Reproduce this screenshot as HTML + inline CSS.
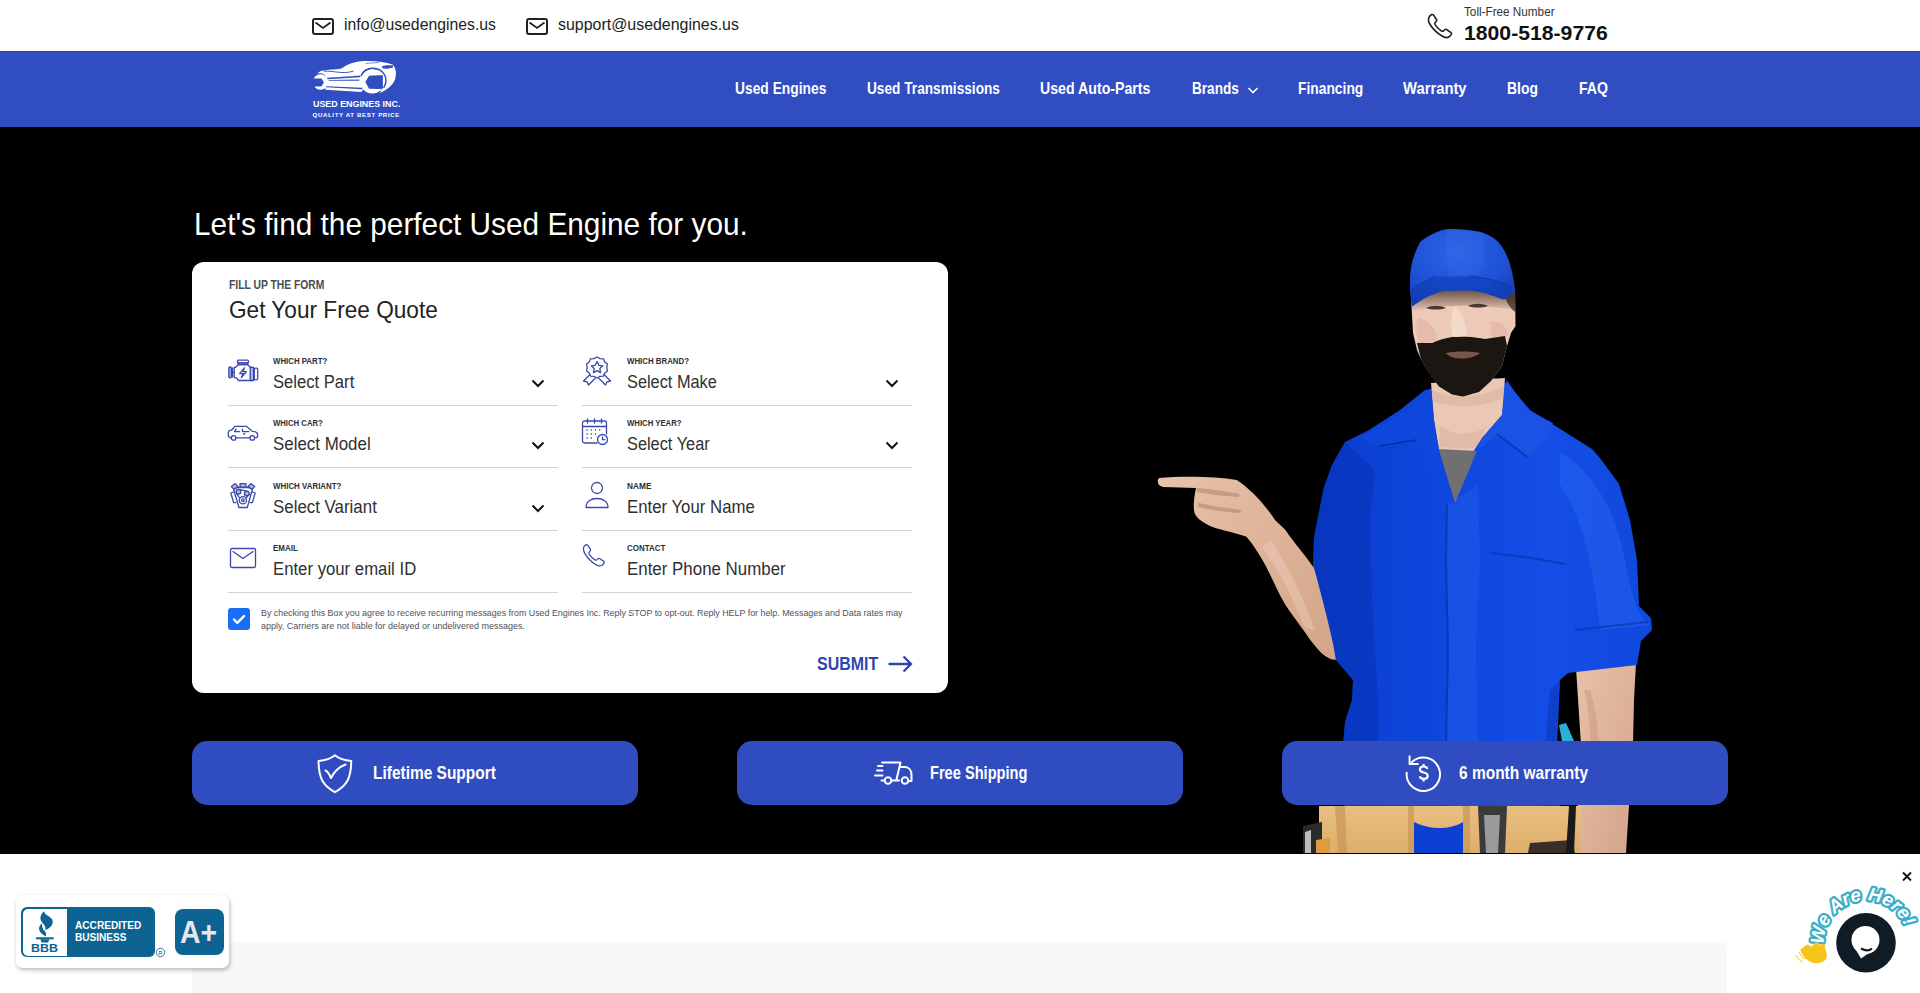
<!DOCTYPE html><html><head><meta charset="utf-8"><style>
*{margin:0;padding:0;box-sizing:border-box}
html,body{width:1920px;height:993px;overflow:hidden;background:#fff;font-family:"Liberation Sans",sans-serif}
.a{position:absolute;white-space:nowrap;line-height:1;transform-origin:0 0}
.r{position:absolute}
.ln{position:absolute;height:1px;background:#d4d4d8}
.bar{position:absolute;top:741px;width:446px;height:64px;background:#304cc1;border-radius:15px}
</style></head><body>
<div class="r" style="left:0;top:0;width:1920px;height:51px;background:#fff"></div>
<div class="r" style="left:0;top:51px;width:1920px;height:76px;background:#304dc1"></div>
<div class="r" style="left:0;top:127px;width:1920px;height:727px;background:#000"></div>
<div class="r" style="left:0;top:51px;width:1920px;height:1px;background:#2f479f"></div>
<svg class="r" style="left:312px;top:18px" width="22" height="17" viewBox="0 0 22 17"><rect x="1" y="1" width="20" height="15" rx="2" fill="none" stroke="#222" stroke-width="2"/><path d="M3.5 4.5l7.5 5.5 7.5-5.5" fill="none" stroke="#222" stroke-width="1.8"/></svg>
<svg class="r" style="left:526px;top:18px" width="22" height="17" viewBox="0 0 22 17"><rect x="1" y="1" width="20" height="15" rx="2" fill="none" stroke="#222" stroke-width="2"/><path d="M3.5 4.5l7.5 5.5 7.5-5.5" fill="none" stroke="#222" stroke-width="1.8"/></svg>
<div class="a" style="left:344.00px;top:16.60px;font-size:16.77px;color:#222;transform:scaleX(0.9408);">info@usedengines.us</div>
<div class="a" style="left:558.00px;top:16.60px;font-size:16.77px;color:#222;transform:scaleX(0.9502);">support@usedengines.us</div>
<svg class="r" style="left:1426px;top:12px" width="27" height="27" viewBox="0 0 27 27"><path d="M3.5 4.5c1.5-2 3-2.5 4-1.5l3 4.5c.6 1-.2 2-1.2 2.8-.8.6-.6 1.6 0 2.6 1.5 2.3 3.5 4.3 5.8 5.8 1 .6 2 .8 2.6 0 .8-1 1.8-1.8 2.8-1.2l4.5 3c1 1 .5 2.5-1.5 4-2 1.5-4.5 1.5-7.5-.5C11 21 6 16 3.5 11.5c-1.6-3-1.5-5 0-7z" fill="none" stroke="#222" stroke-width="1.6"/></svg>
<div class="a" style="left:1463.80px;top:4.72px;font-size:13.08px;color:#333;transform:scaleX(0.8965);">Toll-Free Number</div>
<div class="a" style="left:1463.80px;top:23.16px;font-size:20.60px;font-weight:bold;color:#111;transform:scaleX(1.0288);">1800-518-9776</div>
<div class="a" style="left:735.10px;top:80.96px;font-size:15.99px;font-weight:bold;color:#fff;transform:scaleX(0.8645);">Used Engines</div>
<div class="a" style="left:866.50px;top:80.96px;font-size:15.99px;font-weight:bold;color:#fff;transform:scaleX(0.8551);">Used Transmissions</div>
<div class="a" style="left:1040.00px;top:80.96px;font-size:15.99px;font-weight:bold;color:#fff;transform:scaleX(0.8863);">Used Auto-Parts</div>
<div class="a" style="left:1191.60px;top:80.96px;font-size:15.99px;font-weight:bold;color:#fff;transform:scaleX(0.8497);">Brands</div>
<div class="a" style="left:1298.30px;top:80.96px;font-size:15.99px;font-weight:bold;color:#fff;transform:scaleX(0.8648);">Financing</div>
<div class="a" style="left:1403.40px;top:80.96px;font-size:15.99px;font-weight:bold;color:#fff;transform:scaleX(0.9256);">Warranty</div>
<div class="a" style="left:1507.40px;top:80.96px;font-size:15.99px;font-weight:bold;color:#fff;transform:scaleX(0.8724);">Blog</div>
<div class="a" style="left:1579.00px;top:80.96px;font-size:15.99px;font-weight:bold;color:#fff;transform:scaleX(0.8826);">FAQ</div>
<svg class="r" style="left:1247px;top:86px" width="12" height="9" viewBox="0 0 12 9"><path d="M1.5 2l4.5 4.5 4.5-4.5" fill="none" stroke="#fff" stroke-width="1.6"/></svg>
<div class="a" style="left:194.40px;top:207.63px;font-size:31.98px;color:#fff;transform:scaleX(0.9318);">Let's find the perfect Used Engine for you.</div>
<div class="r" style="left:192px;top:262px;width:756px;height:431px;background:#fff;border-radius:12px"></div>
<div class="a" style="left:228.60px;top:277.82px;font-size:13.08px;font-weight:bold;color:#4a4d55;transform:scaleX(0.7893);">FILL UP THE FORM</div>
<div class="a" style="left:229.00px;top:297.68px;font-size:24.71px;color:#222;transform:scaleX(0.9158);">Get Your Free Quote</div>
<svg class="r" style="left:310px;top:55px" width="90" height="43" viewBox="0 0 1920 917"><path fill="#fff" d="M280 330 C450 300 600 310 680 280 C800 200 950 140 1150 130 C1400 120 1600 150 1760 200 C1830 260 1850 380 1820 500 C1790 620 1650 740 1490 810 C1560 700 1580 560 1540 440 C1500 340 1400 280 1300 285 C1200 290 1120 350 1090 430 L360 490 C330 420 250 370 150 400 C200 350 250 335 280 330 Z"/><path fill="#fff" d="M300 480 L1120 430 L1140 720 L1100 790 L330 740 Z"/><circle cx="225" cy="575" r="165" fill="#fff"/><circle cx="1330" cy="560" r="262" fill="#fff"/><path fill="#304dc1" d="M0 500 L245 500 L295 580 L250 665 L0 680 Z"/><path fill="#304dc1" d="M1180 575 L1260 440 L1450 430 L1555 430 L1555 720 L1450 725 L1260 720 Z"/><path fill="none" stroke="#304dc1" stroke-width="30" d="M1090 440 A285 285 0 0 1 1590 420 A285 285 0 0 1 1570 700"/><path fill="none" stroke="#304dc1" stroke-width="20" stroke-linecap="round" d="M300 345 C500 330 700 420 920 345"/><path fill="#304dc1" d="M360 485 L1080 440 L1070 475 L380 515 Z"/><path fill="#304dc1" d="M400 535 L1050 520 L1050 550 L400 550 Z"/><path fill="#304dc1" d="M340 665 L1120 700 L1110 730 L340 690 Z"/><path fill="#304dc1" d="M1540 240 C1600 215 1700 215 1775 225 L1770 265 C1690 285 1610 300 1565 290 C1540 280 1530 255 1540 240 Z"/><path fill="none" stroke="#304dc1" stroke-width="14" stroke-linecap="round" d="M1200 180 C1300 165 1400 170 1460 160"/></svg>
<div class="a" style="left:312.50px;top:98.88px;font-size:9.59px;font-weight:bold;color:#fff;transform:scaleX(0.9274);">USED ENGINES INC.</div>
<div class="a" style="left:312.50px;top:111.83px;font-size:6.10px;font-weight:bold;color:#fff;letter-spacing:0.641px;">QUALITY AT BEST PRICE</div>
<div class="a" style="left:273.20px;top:356.79px;font-size:8.87px;font-weight:bold;color:#2c2f36;transform:scaleX(0.8844);">WHICH PART?</div>
<div class="a" style="left:273.20px;top:373.34px;font-size:18.02px;color:#303030;transform:scaleX(0.9220);">Select Part</div>
<svg class="r" style="left:531px;top:378.6px" width="14" height="9" viewBox="0 0 14 9"><path d="M1.5 1.5l5.5 5.5 5.5-5.5" fill="none" stroke="#111" stroke-width="2"/></svg>
<div class="ln" style="left:228px;top:404.7px;width:330px"></div>
<div class="a" style="left:627.20px;top:356.79px;font-size:8.87px;font-weight:bold;color:#2c2f36;transform:scaleX(0.8866);">WHICH BRAND?</div>
<div class="a" style="left:627.20px;top:373.34px;font-size:18.02px;color:#303030;transform:scaleX(0.9065);">Select Make</div>
<svg class="r" style="left:885px;top:378.6px" width="14" height="9" viewBox="0 0 14 9"><path d="M1.5 1.5l5.5 5.5 5.5-5.5" fill="none" stroke="#111" stroke-width="2"/></svg>
<div class="ln" style="left:582px;top:404.7px;width:330px"></div>
<div class="a" style="left:273.20px;top:418.79px;font-size:8.87px;font-weight:bold;color:#2c2f36;transform:scaleX(0.8718);">WHICH CAR?</div>
<div class="a" style="left:273.20px;top:435.34px;font-size:18.02px;color:#303030;transform:scaleX(0.9378);">Select Model</div>
<svg class="r" style="left:531px;top:440.6px" width="14" height="9" viewBox="0 0 14 9"><path d="M1.5 1.5l5.5 5.5 5.5-5.5" fill="none" stroke="#111" stroke-width="2"/></svg>
<div class="ln" style="left:228px;top:466.7px;width:330px"></div>
<div class="a" style="left:627.20px;top:418.79px;font-size:8.87px;font-weight:bold;color:#2c2f36;transform:scaleX(0.8734);">WHICH YEAR?</div>
<div class="a" style="left:627.20px;top:435.34px;font-size:18.02px;color:#303030;transform:scaleX(0.9068);">Select Year</div>
<svg class="r" style="left:885px;top:440.6px" width="14" height="9" viewBox="0 0 14 9"><path d="M1.5 1.5l5.5 5.5 5.5-5.5" fill="none" stroke="#111" stroke-width="2"/></svg>
<div class="ln" style="left:582px;top:466.7px;width:330px"></div>
<div class="a" style="left:273.20px;top:481.79px;font-size:8.87px;font-weight:bold;color:#2c2f36;transform:scaleX(0.8934);">WHICH VARIANT?</div>
<div class="a" style="left:273.20px;top:498.34px;font-size:18.02px;color:#303030;transform:scaleX(0.9370);">Select Variant</div>
<svg class="r" style="left:531px;top:503.6000000000001px" width="14" height="9" viewBox="0 0 14 9"><path d="M1.5 1.5l5.5 5.5 5.5-5.5" fill="none" stroke="#111" stroke-width="2"/></svg>
<div class="ln" style="left:228px;top:529.7px;width:330px"></div>
<div class="a" style="left:627.20px;top:481.79px;font-size:8.87px;font-weight:bold;color:#2c2f36;transform:scaleX(0.9383);">NAME</div>
<div class="a" style="left:627.20px;top:498.34px;font-size:18.02px;color:#303030;transform:scaleX(0.9312);">Enter Your Name</div>
<div class="ln" style="left:582px;top:529.7px;width:330px"></div>
<div class="a" style="left:273.20px;top:543.89px;font-size:8.87px;font-weight:bold;color:#2c2f36;transform:scaleX(0.8994);">EMAIL</div>
<div class="a" style="left:273.20px;top:560.44px;font-size:18.02px;color:#303030;transform:scaleX(0.9288);">Enter your email ID</div>
<div class="ln" style="left:228px;top:591.8px;width:330px"></div>
<div class="a" style="left:627.20px;top:543.89px;font-size:8.87px;font-weight:bold;color:#2c2f36;transform:scaleX(0.8971);">CONTACT</div>
<div class="a" style="left:627.20px;top:560.44px;font-size:18.02px;color:#303030;transform:scaleX(0.9378);">Enter Phone Number</div>
<div class="ln" style="left:582px;top:591.8px;width:330px"></div>
<svg class="r" style="left:227px;top:359px" width="32" height="23" viewBox="0 0 32 23"><rect fill="none" stroke="#3b48ab" stroke-width="1.3" stroke-linejoin="round" stroke-linecap="round" x="10.5" y="1.2" width="11" height="2.8" rx="1"/><path fill="#aeb4f0" stroke="#3b48ab" stroke-width="1.3" stroke-linejoin="round" stroke-linecap="round" d="M11.3 4v1.6h9.4V4z"/><path fill="none" stroke="#3b48ab" stroke-width="1.3" stroke-linejoin="round" stroke-linecap="round" d="M11.2 5.6 L8.7 8.3 H7.2 V18.4 L9.2 18.8 L11.6 21.5 H25.4 V8.3 H23.2 L20.8 5.6 Z"/><path fill="#aeb4f0" stroke="#3b48ab" stroke-width="1.3" stroke-linejoin="round" stroke-linecap="round" d="M23.2 8.3h3.4v13.2h-3.4z"/><rect fill="none" stroke="#3b48ab" stroke-width="1.3" stroke-linejoin="round" stroke-linecap="round" x="27.3" y="9.2" width="3.4" height="11.6" rx="1.2"/><rect fill="#aeb4f0" stroke="#3b48ab" stroke-width="1.3" stroke-linejoin="round" stroke-linecap="round" x="1.8" y="8" width="2.6" height="10.8" rx="1.3"/><path fill="none" stroke="#3b48ab" stroke-width="1.3" stroke-linejoin="round" stroke-linecap="round" d="M5.6 9v9 M4.4 13.4h2.8"/><path fill="none" stroke="#3b48ab" stroke-width="1.3" stroke-linejoin="round" stroke-linecap="round" d="M17.5 8.8 L12.6 14.6 H16.2 L14.3 18.6 L19.4 12.7 H15.9 Z"/></svg>
<svg class="r" style="left:581px;top:355px" width="32" height="31" viewBox="0 0 32 31"><path fill="none" stroke="#3b48ab" stroke-width="1.3" stroke-linejoin="round" stroke-linecap="round" d="M16 2l3 1.6 3.4 0.2 1.4 3.1 2.6 2.2-.6 3.4.6 3.4-2.6 2.2-1.4 3.1-3.4.2-3 1.6-3-1.6-3.4-.2-1.4-3.1-2.6-2.2.6-3.4-.6-3.4 2.6-2.2 1.4-3.1 3.4-.2z"/><path fill="none" stroke="#3b48ab" stroke-width="1.3" stroke-linejoin="round" stroke-linecap="round" d="M16 6.5l1.8 3.8 4 .5-3 2.8.8 4-3.6-2-3.6 2 .8-4-3-2.8 4-.5z"/><path fill="none" stroke="#3b48ab" stroke-width="1.3" stroke-linejoin="round" stroke-linecap="round" d="M9 19.5l-6.5 6.5 3.5.8 1.5 3.2 6.5-6.5 M23 19.5l6.5 6.5-3.5.8-1.5 3.2-6.5-6.5"/></svg>
<svg class="r" style="left:227px;top:425px" width="32" height="17" viewBox="0 0 32 17"><path fill="none" stroke="#3b48ab" stroke-width="1.3" stroke-linejoin="round" stroke-linecap="round" d="M4.3 12.9L3.5 12.9C2 12.2 1.3 11.5 1.3 10.8V8C1.3 6.5 2.2 5.6 3.4 5.4 4.6 5.2 5.2 4.8 5.8 4L7.6 1.6 8.4 1.3H19.3L25.3 6.2C25.8 6.5 26.5 6.6 27.4 6.6 29.3 6.8 30.6 8.3 30.6 10V11.2C30.6 12 29.8 12.6 28.5 12.6 M8.9 12.8H23 M9.1 4.1L7.6 6.6H12.6 M15.5 4.1V6.6H21.8 M16.6 9H17.8"/><circle fill="none" stroke="#3b48ab" stroke-width="1.3" stroke-linejoin="round" stroke-linecap="round" cx="6.6" cy="12.9" r="2.3"/><circle fill="none" stroke="#3b48ab" stroke-width="1.3" stroke-linejoin="round" stroke-linecap="round" cx="25.3" cy="12.9" r="2.3"/></svg>
<svg class="r" style="left:581px;top:418px" width="29" height="28" viewBox="0 0 29 28"><path fill="none" stroke="#3b48ab" stroke-width="1.3" stroke-linejoin="round" stroke-linecap="round" d="M16 25H3.5a2 2 0 0 1-2-2V5a2 2 0 0 1 2-2h20a2 2 0 0 1 2 2v11 M1.5 8.5h24 M6.5 1v4 M13.5 1v4 M20.5 1v4"/><circle fill="none" stroke="#3b48ab" stroke-width="1.3" stroke-linejoin="round" stroke-linecap="round" cx="21.5" cy="21.5" r="5"/><path fill="none" stroke="#3b48ab" stroke-width="1.3" stroke-linejoin="round" stroke-linecap="round" d="M21.5 19v2.7h2.3"/><path stroke="#3b48ab" stroke-width="1.6" stroke-dasharray="1.2 3" d="M5.5 12h16 M5.5 16h10 M5.5 20h8"/></svg>
<svg class="r" style="left:229px;top:482px" width="28" height="28" viewBox="0 0 28 28"><path fill="none" stroke="#3b48ab" stroke-width="1.3" stroke-linejoin="round" stroke-linecap="round" d="M4.5 7 L8.5 5.5 L19.5 5.5 L23.5 7 L18.3 25.5 L10 25.5 Z"/><path fill="#aeb4f0" stroke="#3b48ab" stroke-width="1.3" stroke-linejoin="round" stroke-linecap="round" d="M11 1.6h6v3.6h-6z"/><path fill="#aeb4f0" stroke="#3b48ab" stroke-width="1.3" stroke-linejoin="round" stroke-linecap="round" d="M2.3 4.6 L6.3 1.6 L9 4.6 L5 7.4 Z"/><path fill="#aeb4f0" stroke="#3b48ab" stroke-width="1.3" stroke-linejoin="round" stroke-linecap="round" d="M25.7 4.6 L21.7 1.6 L19 4.6 L23 7.4 Z"/><path fill="none" stroke="#3b48ab" stroke-width="1.3" stroke-linejoin="round" stroke-linecap="round" d="M4.6 10 L1.8 11 L4.6 20.6 L6.9 20.6 M23.4 10 L26.2 11 L23.4 20.6 L21.1 20.6"/><circle fill="#aeb4f0" stroke="#3b48ab" stroke-width="1.3" stroke-linejoin="round" stroke-linecap="round" cx="9.5" cy="9.8" r="2.4"/><circle fill="#aeb4f0" stroke="#3b48ab" stroke-width="1.3" stroke-linejoin="round" stroke-linecap="round" cx="17.8" cy="11.5" r="2.4"/><circle fill="none" stroke="#3b48ab" stroke-width="1.3" stroke-linejoin="round" stroke-linecap="round" cx="13.9" cy="18.2" r="3.6"/><circle fill="none" stroke="#3b48ab" stroke-width="1.3" stroke-linejoin="round" stroke-linecap="round" cx="13.9" cy="18.2" r="1.3"/><path fill="none" stroke="#3b48ab" stroke-width="1.3" stroke-linejoin="round" stroke-linecap="round" d="M9.5 7.4 L17.8 9.1 M7.4 11 L10.6 16 M20.1 12.4 L17 16"/></svg>
<svg class="r" style="left:584px;top:481px" width="27" height="29" viewBox="0 0 27 29"><circle fill="none" stroke="#3b48ab" stroke-width="1.3" stroke-linejoin="round" stroke-linecap="round" cx="13" cy="7" r="5.5"/><path fill="none" stroke="#3b48ab" stroke-width="1.3" stroke-linejoin="round" stroke-linecap="round" d="M2 26.5c0-6 5-9 11-9s11 3 11 9z"/></svg>
<svg class="r" style="left:229px;top:547px" width="28" height="22" viewBox="0 0 28 22"><rect fill="none" stroke="#3b48ab" stroke-width="1.3" stroke-linejoin="round" stroke-linecap="round" x="1.5" y="1.5" width="25" height="19" rx="1.5"/><path fill="none" stroke="#3b48ab" stroke-width="1.3" stroke-linejoin="round" stroke-linecap="round" d="M4 4.5l10 7 10-7"/></svg>
<svg class="r" style="left:581px;top:543px" width="26" height="26" viewBox="0 0 26 26"><path fill="none" stroke="#3b48ab" stroke-width="1.3" stroke-linejoin="round" stroke-linecap="round" d="M3 3.5c1.2-1.6 2.6-2.2 3.6-1.3l2.8 4.2c.5.9-.2 1.8-1.1 2.5-.7.6-.5 1.5 0 2.4 1.4 2.1 3.2 3.9 5.3 5.3.9.5 1.8.7 2.4 0 .7-.9 1.6-1.6 2.5-1.1l4.2 2.8c.9 1 .3 2.4-1.3 3.6-1.8 1.4-4.1 1.4-6.8-.4C10.4 19 6.5 15 3.9 10.6 2.5 8 2 5.5 3 3.5z"/></svg>
<div class="r" style="left:228px;top:608px;width:22px;height:22px;background:#1a6ef5;border-radius:3px"></div>
<svg class="r" style="left:228px;top:608px" width="22" height="22" viewBox="0 0 22 22"><path d="M6 11.5l3.3 3.3 6.7-6.7" fill="none" stroke="#fff" stroke-width="2.4" stroke-linecap="round" stroke-linejoin="round"/></svg>
<div class="a" style="left:260.60px;top:607.68px;font-size:9.59px;color:#4f5159;transform:scaleX(0.9262);">By checking this Box you agree to receive recurring messages from Used Engines Inc. Reply STOP to opt-out. Reply HELP for help. Messages and Data rates may</div>
<div class="a" style="left:260.60px;top:621.48px;font-size:9.59px;color:#4f5159;transform:scaleX(0.9375);">apply, Carriers are not liable for delayed or undelivered messages.</div>
<div class="a" style="left:816.70px;top:654.92px;font-size:18.75px;font-weight:bold;color:#2f45b0;transform:scaleX(0.8516);">SUBMIT</div>
<svg class="r" style="left:887px;top:655px" width="26" height="18" viewBox="0 0 26 18"><path d="M1.5 9h22.5 M16.5 1.5l7.5 7.5-7.5 7.5" fill="none" stroke="#2f45b0" stroke-width="2.3"/></svg>
<svg class="r" style="left:1150px;top:200px" width="550" height="654" viewBox="1150 200 550 654">
<defs>
<linearGradient id="shirt" x1="0" y1="0" x2="1" y2="0">
<stop offset="0" stop-color="#0a3ccc"/><stop offset="0.35" stop-color="#0e46dc"/><stop offset="0.7" stop-color="#144ee6"/><stop offset="1" stop-color="#1048dc"/></linearGradient>
<linearGradient id="skin" x1="0" y1="0" x2="1" y2="1">
<stop offset="0" stop-color="#e8c2aa"/><stop offset="1" stop-color="#d3a488"/></linearGradient>
<radialGradient id="cap" cx="0.45" cy="0.3" r="0.75">
<stop offset="0" stop-color="#2d62e4"/><stop offset="0.6" stop-color="#1f53d6"/><stop offset="1" stop-color="#153fb8"/></radialGradient>
<linearGradient id="eyesh" x1="0" y1="0" x2="0" y2="1"><stop offset="0" stop-color="#3a2820" stop-opacity="0.85"/><stop offset="1" stop-color="#3a2820" stop-opacity="0"/></linearGradient>
<linearGradient id="belt" x1="0" y1="0" x2="0" y2="1">
<stop offset="0" stop-color="#e9bf80"/><stop offset="1" stop-color="#dcae6c"/></linearGradient>
</defs>
<!-- right forearm -->
<path fill="url(#skin)" d="M1576 668 L1636 663 L1634 700 L1633 745 L1630 790 L1626 853 L1574 853 L1578 800 L1581 745 Z"/>
<path fill="#c9977b" opacity="0.5" d="M1590 690 C1600 720 1600 760 1598 800 L1590 800 C1592 760 1592 720 1584 690 Z"/>
<!-- body -->
<path fill="url(#shirt)" d="M1425 390 L1400 410 L1369 430 L1345 442 L1332 465 L1323.7 488 L1314 537 L1312.8 568 L1318 610 L1326 650 L1336 660 L1353 680 L1352 700 L1345 722 L1343 745 L1344 810 L1560 810 L1557 745 L1560 680 L1568 673 L1637 665 L1641 641 L1652 630 L1651 618 L1639 606 L1637 560 L1630 520 L1619 484 L1600 458 L1592 449 L1530 410 L1508 384 L1495 378 Z"/>
<!-- shirt folds / shading -->
<path fill="#0832b4" opacity="0.55" d="M1345 442 L1332 465 L1323.7 488 L1314 537 L1312.8 568 L1318 610 L1326 650 L1336 660 L1353 680 L1352 700 L1345 722 L1343 745 L1344 810 L1380 810 L1378 700 L1372 600 L1370 520 L1375 470 Z"/>
<path fill="#2a62f0" opacity="0.35" d="M1447 505 L1478 485 L1480 560 L1476 650 L1478 745 L1480 810 L1450 810 L1446 745 L1448 650 L1446 560 Z"/>
<path fill="none" stroke="#0630a8" stroke-width="2" opacity="0.7" d="M1447 505 L1446 560 L1448 650 L1446 745 L1448 810"/>
<path fill="#3070f5" opacity="0.35" d="M1560 452 C1590 470 1612 500 1625 560 C1632 600 1640 620 1650 625 L1600 630 C1595 580 1585 520 1560 485 Z"/>
<path fill="none" stroke="#0630a8" stroke-width="2" opacity="0.6" d="M1491 553 C1520 556 1545 560 1565 564 M1575 630 L1648 622"/>
<path fill="#0731a8" opacity="0.45" d="M1560 680 L1556 745 L1557 810 L1540 810 L1545 745 L1550 690 Z"/>
<!-- neck -->
<path fill="#eac8b4" d="M1431 383 L1505 378 L1502 415 L1482 438 L1473 452 L1439 450 L1434 420 Z"/>
<path fill="#c9a08a" opacity="0.3" d="M1432 390 C1450 398 1475 400 1504 386 L1503 398 C1480 408 1455 408 1433 402 Z"/>
<path fill="#c29682" opacity="0.25" d="M1440 425 C1452 436 1468 436 1486 428 L1476 448 C1462 449 1450 448 1439 446 Z"/>
<!-- grey tee -->
<path fill="#707073" d="M1438 449 L1477 451 L1455 503 Z"/>
<!-- collar -->
<path fill="#0f47dc" d="M1360 437.7 L1408 410 L1431 388 L1434 420 L1439 450 L1455 504 L1446 500 L1416 440 L1379 446 Z"/>
<path fill="#1a52e6" d="M1506.6 380 L1527.5 410 L1553 423 L1546 440 L1527.5 457 L1497 434 L1476 452 L1457 504 L1482 438 L1502 415 Z"/>
<path fill="none" stroke="#062a9a" stroke-width="1.5" opacity="0.8" d="M1379 446 L1416 440 M1497 434 L1527.5 457"/>
<!-- left forearm + hand -->
<path fill="url(#skin)" d="M1159 478 C1180 476 1215 476 1236.7 480 C1252 490 1265 505 1275 520 L1285 529.4 C1296 545 1306 556 1314 568 C1320 590 1328 620 1333.4 645.5 L1335.8 659.8 C1326 660 1318 650 1309 638.2 C1300 625 1292 615 1285 604.3 C1277 590 1272 578 1265.7 565.7 C1258 552 1252 543 1246.4 536.7 C1235 533 1222 530 1212.5 527 C1203 523 1196 518 1194.4 512.5 C1193 505 1194 498 1196 488 L1163 487 C1157 486 1157 480 1159 478 Z"/>
<path fill="#a97a66" opacity="0.5" d="M1197 488 C1210 489 1225 491 1240 494 L1238 497 C1222 496 1208 494 1197 492 Z M1198 503 C1212 506 1225 508 1242 510 L1240 513 C1224 512 1210 510 1198 507 Z"/>
<path fill="#f3d8c8" opacity="0.35" d="M1270 540 C1285 560 1300 590 1315 630 L1305 628 C1292 598 1280 570 1262 548 Z"/>
<!-- face -->
<path fill="#eccab7" d="M1411 292 L1515 288 L1515.5 326 L1511 333 L1507 346 L1502 366 L1491 381 L1479 392 L1463 396 L1452 394 L1439 386 L1429 373 L1421 359 L1417 350 L1413 333 L1411.5 306 Z"/>
<path fill="#e2a494" opacity="0.4" d="M1418 318 C1428 320 1436 328 1438 340 L1420 344 C1416 335 1415 326 1418 318 Z M1490 322 C1500 320 1508 326 1508 336 L1492 340 Z"/>
<path fill="#f6e0d2" opacity="0.7" d="M1455 306 C1462 312 1467 326 1467 336 L1452 336 C1451 324 1450 314 1455 306 Z"/>
<path fill="#2a1d18" opacity="0.7" d="M1503 295 C1508 292 1512 290 1515 288 L1515.5 312 C1512 310 1509 306 1506 300 Z"/>
<path fill="url(#eyesh)" d="M1412 296 C1430 286 1480 284 1515 290 L1515 310 C1480 304 1440 304 1412 312 Z"/>
<path fill="#4a3830" d="M1426 308 C1432 305 1440 305 1446 308 C1440 310 1432 310 1426 308 Z M1468 306 C1474 303 1482 303 1488 306 C1482 308 1474 308 1468 306 Z"/>
<!-- beard -->
<path fill="#1c1613" d="M1417 343 L1432 343 C1438 340 1446 338 1452 337 C1458 337 1464 336.5 1466 336.7 C1474 337 1480 338 1485 339 C1492 338 1498 337 1505 336 L1507 346 L1502 366 L1491 381 L1479 392 L1463 396.5 L1452 394.5 L1439 386.5 L1429 373.5 L1421 359 Z"/>
<path fill="#9a6e62" opacity="0.75" d="M1446 353 C1456 351 1470 351 1480 353 C1475 357 1468 358.5 1462 358.5 C1455 358.5 1449 357 1446 353 Z"/>
<!-- cap -->
<path fill="url(#cap)" d="M1412 306.6 C1410 296 1409.5 285 1410 278 C1410.5 266 1413 256 1420 242 C1430 234 1440 230 1448 229 C1460 228.5 1472 230 1481 232 C1490 235 1496 239 1500 244 C1506 252 1510 262 1512 272 C1514 280 1515 288 1514.8 292.5 L1503.7 299.6 C1496 297 1485 292 1470.5 290.5 L1445 290.5 C1435 293 1426 297 1423 298.5 Z"/>
<path fill="#0f3cb4" opacity="0.6" d="M1411 290.5 C1420 284 1428 279 1435 276.4 L1470.5 276.4 C1490 278 1502 282 1510.8 286.5 L1514.8 292.5 L1503.7 299.6 C1496 297 1485 292 1470.5 290.5 L1445 290.5 C1435 293 1426 297 1412 306.6 Z"/>
<path fill="#3a70ee" opacity="0.25" d="M1446 231 C1458 229 1472 230 1482 233 C1486 250 1484 265 1478 275 L1450 276 C1446 262 1444 245 1446 231 Z"/>
<path fill="none" stroke="#0a2f9c" stroke-width="1" opacity="0.7" d="M1411 290.5 C1420 284 1428 279 1435 276.4 M1470.5 276.4 C1490 278 1502 282 1510.8 286.5"/>
<!-- tool belt -->
<path fill="url(#belt)" d="M1319 806 L1582 806 L1580 853 L1319 853 Z"/>
<path fill="#0b40d2" d="M1414 822 C1430 830 1450 830 1463 822 L1463 853 L1414 853 Z"/>
<path fill="#c99656" opacity="0.7" d="M1335 806 L1345 806 L1347 853 L1338 853 Z M1408 806 L1414 806 L1414 853 L1408 853 Z M1463 806 L1470 806 L1470 853 L1463 853 Z"/>
<path fill="#3b3b3b" d="M1478 806 L1507 806 L1505 853 L1480 853 Z"/>
<path fill="#9a9a9a" d="M1484 815 L1500 815 L1498 853 L1486 853 Z"/>
<path fill="#3a2e28" d="M1530 843 L1572 840 L1575 853 L1528 853 Z"/>
<path fill="#1a1a1a" d="M1569 806 L1576 806 L1574 853 L1566 853 Z"/>
<path fill="#2a2a2a" d="M1303 826 L1322 822 L1322 853 L1303 853 Z"/>
<path fill="#bdbdbd" d="M1305 832 L1311 830 L1311 853 L1305 853 Z"/>
<path fill="#e09a40" d="M1316 840 L1330 838 L1330 853 L1316 853 Z"/>
<path fill="#2ab0d8" d="M1559 725 L1566 723 L1574 741 L1562 741 Z"/>
</svg>
<div class="bar" style="left:192px"></div>
<div class="bar" style="left:737px"></div>
<div class="bar" style="left:1282px"></div>
<svg class="r" style="left:312px;top:750px" width="46" height="44" viewBox="0 0 46 44"><path fill="none" stroke="#fff" stroke-width="2" stroke-linecap="round" stroke-linejoin="round" d="M22.9 5.3C19 8.5 12 10.5 6.5 11c.2 11 1.5 15.5 4 20 3 5 7.5 8.5 12.4 11.1 4.9-2.6 9.4-6.1 12.4-11.1 2.5-4.5 3.8-9 4-20-5.5-.5-12.5-2.5-16.4-5.7z"/><path fill="none" stroke="#fff" stroke-width="2" stroke-linecap="round" stroke-linejoin="round" d="M13.5 20.5c2 .8 3.8 3.5 5.5 7.5 3-6 8-11 14.5-13.5"/></svg>
<svg class="r" style="left:872px;top:759px" width="42" height="30" viewBox="0 0 42 30"><path fill="none" stroke="#fff" stroke-width="2" stroke-linecap="round" stroke-linejoin="round" d="M10 3.5h18.5l-4.2 18 M27.5 8h5.5c4 0 6.5 3.5 6.5 8v6h-1.8 M6 7h4.5 M5 11.5h5.5 M3 16.5h7.5 M9.5 21.5h3 M19.5 21.5h7.5"/><circle fill="none" stroke="#fff" stroke-width="2" stroke-linecap="round" stroke-linejoin="round" cx="16" cy="21.5" r="3.3"/><circle fill="none" stroke="#fff" stroke-width="2" stroke-linecap="round" stroke-linejoin="round" cx="33" cy="21.5" r="3.3"/></svg>
<svg class="r" style="left:1400px;top:750px" width="46" height="46" viewBox="0 0 46 46"><path fill="none" stroke="#fff" stroke-width="2" stroke-linecap="round" stroke-linejoin="round" d="M6.7 22.7A16.7 16.7 0 1 0 12 12 M9.6 6.2V14h8.2"/><path fill="none" stroke="#fff" stroke-width="2.2" d="M27.5 18.8c-.6-1.5-2-2.3-3.8-2.3-2.3 0-3.8 1.2-3.8 3s1.5 2.5 3.8 3c2.3.5 4 1.3 4 3.2s-1.7 3.2-4 3.2c-1.8 0-3.4-.9-4-2.5 M23.6 14v2.5 M23.6 28.9v2.5"/></svg>
<div class="a" style="left:372.50px;top:765.06px;font-size:17.88px;font-weight:bold;color:#fff;transform:scaleX(0.8659);">Lifetime Support</div>
<div class="a" style="left:929.80px;top:765.06px;font-size:17.88px;font-weight:bold;color:#fff;transform:scaleX(0.8179);">Free Shipping</div>
<div class="a" style="left:1458.80px;top:765.06px;font-size:17.88px;font-weight:bold;color:#fff;transform:scaleX(0.8670);">6 month warranty</div>
<div class="r" style="left:192px;top:942px;width:1535px;height:60px;background:linear-gradient(#fdfcfc 0,#f8f6f7 4px)"></div>
<div class="r" style="left:16px;top:895px;width:213px;height:73px;background:#fff;border-radius:7px;box-shadow:1px 2px 4px rgba(0,0,0,0.28)"></div>
<div class="r" style="left:21px;top:907px;width:134px;height:50px;background:#0d6391;border-radius:6px"></div>
<div class="r" style="left:22.5px;top:908.5px;width:44px;height:47px;background:#fff;border-radius:5px 0 0 5px"></div>
<div class="r" style="left:175px;top:909px;width:49px;height:46px;background:#0d6391;border-radius:8px"></div>
<svg class="r" style="left:30px;top:910px" width="30" height="44" viewBox="0 0 30 44"><path fill="#0d6391" d="M14 1.2C10.5 4.5 9.2 8.5 12 12.2 14.5 15 16.2 17 15.2 20.3 20.5 18 24.2 14 22.2 9.6 20.6 6 15 5.8 14 1.2Z M12.2 13.2C8.6 15.8 8 20 11 23 12.6 24.6 14.6 25.4 15.6 26.6 16.6 24.6 16.2 22.4 14.6 20.9 12.6 19 11.6 16.4 12.2 13.2Z"/><rect x="6" y="27.3" width="17.6" height="2" fill="#0d6391"/><path fill="#0d6391" d="M10.4 29.3h9l-1.2 3.3h-6.6z"/></svg>
<div class="a" style="left:31.00px;top:942.65px;font-size:11.05px;font-weight:bold;color:#0d6391;transform:scaleX(1.1276);">BBB</div>
<div class="a" style="left:74.90px;top:921.39px;font-size:10.17px;font-weight:bold;color:#fff;transform:scaleX(0.9956);">ACCREDITED</div>
<div class="a" style="left:74.90px;top:933.19px;font-size:10.17px;font-weight:bold;color:#fff;transform:scaleX(0.9920);">BUSINESS</div>
<svg class="r" style="left:155px;top:947px" width="11" height="11" viewBox="0 0 11 11"><circle cx="5.5" cy="5.5" r="4.2" fill="none" stroke="#0d6391" stroke-width="0.8"/><text x="5.5" y="7.8" font-size="6" text-anchor="middle" fill="#0d6391" font-family="Liberation Sans">R</text></svg>
<div class="a" style="left:180.00px;top:917.16px;font-size:30.52px;font-weight:bold;color:#e8e8ea;transform:scaleX(0.9289);">A+</div>
<svg class="r" style="left:1895px;top:866px" width="24" height="20" viewBox="0 0 24 20"><path d="M8 6.5l8 8 M16 6.5l-8 8" stroke="#111" stroke-width="1.8"/></svg>
<svg class="r" style="left:1780px;top:870px" width="140" height="110" viewBox="1780 870 140 110"><defs><path id="arc" d="M1824.0 944.5 A42 42 0 0 1 1907.4 935.7"/></defs><text font-family="Liberation Sans" font-weight="bold" font-style="italic" font-size="18.5" fill="#fff" stroke="#3aaec6" stroke-width="4.5" stroke-linejoin="round" paint-order="stroke" letter-spacing="0.2"><textPath href="#arc">We Are Here!</textPath></text><circle cx="1866" cy="942.8" r="29.8" fill="#0f1c26"/><circle cx="1865.5" cy="940" r="14" fill="#fff"/><path d="M1856 950 L1861 958.5 L1869 953 Z" fill="#fff"/><path d="M1861 948.5 C1865 951 1869 951 1872 948.5" stroke="#0f1c26" stroke-width="2.2" fill="none"/><path fill="#f5c518" d="M1803 948 C1806 944 1809 944 1811 947 L1815 943 C1818 941 1820 943 1819 946 L1822 944 C1824 943 1826 945 1825 948 L1827 955 C1827 961 1821 964 1814 963 C1808 962 1804 957 1801 952 C1800 950 1801 948 1803 948 Z"/><path stroke="#f5c518" stroke-width="1" fill="none" d="M1796 955 C1798 959 1800 961 1803 962 M1799 952 C1801 956 1803 958 1806 959"/></svg>
</body></html>
